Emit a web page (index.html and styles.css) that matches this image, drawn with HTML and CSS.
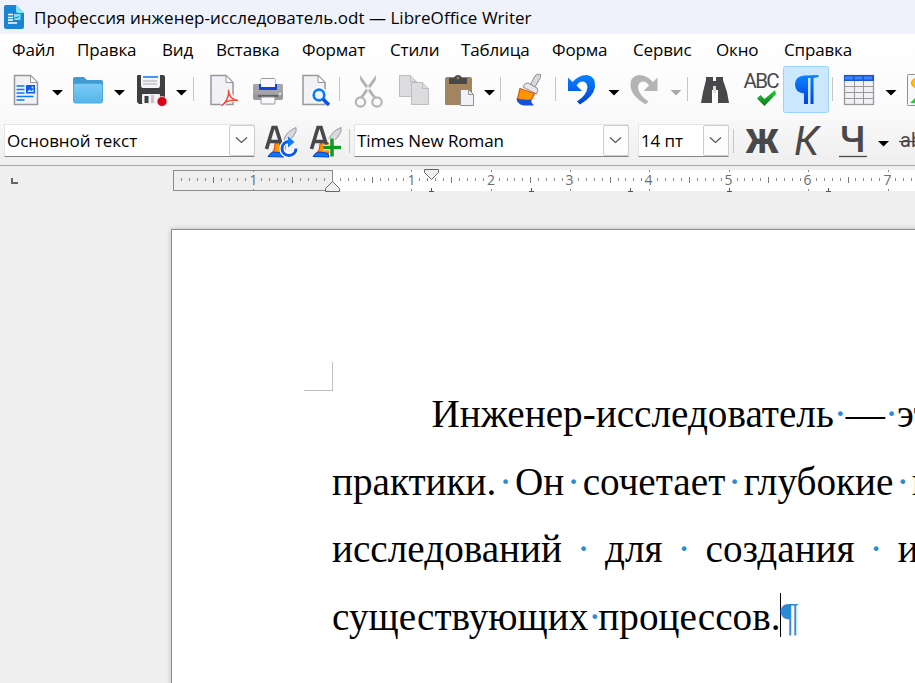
FILE: index.html
```html
<!DOCTYPE html>
<html lang="ru">
<head>
<meta charset="utf-8">
<title>Профессия инженер-исследователь.odt — LibreOffice Writer</title>
<link rel="stylesheet" href="styles.css">
</head>
<body>
<svg class="defs" width="0" height="0" aria-hidden="true">
  <defs>
    <linearGradient id="folder" x1="0" y1="0" x2="0" y2="1"><stop offset="0" stop-color="#7dcbf4"/><stop offset="1" stop-color="#55b5ea"/></linearGradient>
    <linearGradient id="blue" x1="0" y1="0" x2="0" y2="1"><stop offset="0" stop-color="#0a84ff"/><stop offset="1" stop-color="#0040dd"/></linearGradient>
    <linearGradient id="green" x1="0" y1="0" x2="0" y2="1"><stop offset="0" stop-color="#28cd41"/><stop offset="1" stop-color="#0a7a18"/></linearGradient>
    <g id="arrow"><path d="M2.500 24h11l-5.500 5.500z"/></g>
    <g id="chev"><path d="M6 11.500l5.500 5 5.500-5" fill="none" stroke="#555" stroke-width="1.200"/></g>
    <path id="turn" d="M568 77.500l4.500 4.500q7-7.500 14.500-7 9 1.500 8 12-1.500 9.500-15 17.500l-3-3q9.500-6 10.500-14-.5-6-5-6-3.500 0-6 4l5.500 5.500H568z"/>
    <g id="stylebase">
      <path d="M284 139q3-8 12-11.500v4q-2 6-9 10.500z" fill="#d8d8de" stroke="#98989d" stroke-width="1"/>
      <path d="M275 144l4-2 7 2-2 9-14 1q5-2 5-10z" fill="#ff9500" stroke="#e8501a" stroke-width="1.200"/>
      <path d="M268 156.500q4-6 10-4l5 1 1 3.500z" fill="#0a78f0" stroke="#0040dd"/>
      <path d="M266.500 149L273 127.500h3L281.500 145M269.500 141.500h10" fill="none" stroke="#48484a" stroke-width="3.600"/>
    </g>
  </defs>
</svg>
<header class="title">
  <svg width="21" height="25" viewBox="4 5 21 25"><path d="M6 5h12l6 6v16q0 2-2 2H6q-2 0-2-2V7q0-2 2-2z" fill="#1a86d3"/><path d="M16 5l8 8v-6q0-2-2-2z" fill="#eff2fa"/><path d="M16 5l8 8h-6q-2 0-2-2z" fill="#7fe8fb"/><path d="M8 14.500h5M8 17.500h5M8 20h5M8 23h9" stroke="#fff" stroke-width="1.300"/><rect x="14" y="14" width="6.500" height="6" fill="#7fe0f5"/><path d="M14 19l2-2 1 1 2-2" stroke="#1a86d3" fill="none"/></svg>
  <span>Профессия инженер-исследователь.odt — LibreOffice Writer</span>
</header>
<div class="chrome">
<nav class="menu">
  <span>Файл</span><span>Правка</span><span>Вид</span><span>Вставка</span><span>Формат</span><span>Стили</span><span>Таблица</span><span>Форма</span><span>Сервис</span><span>Окно</span><span>Справка</span>
</nav>
<div class="bar">
  <svg width="46" height="46" viewBox="3 66 46 46"><path d="M14.500 75.500h16l7 7v22h-23z" fill="#f2f2f6" stroke="#98989d" stroke-width="1.500"/><path d="M30.500 75.500v7h7z" fill="#fff" stroke="#98989d"/><path d="M16.500 86h8M16.500 89.500h8M16.500 93h8M16.500 96.500h17M16.500 100h8" stroke="#0a7af5" stroke-width="1.500"/><rect x="26" y="85" width="9" height="8.500" fill="#0a5cf0"/><path d="M27 92l2.500-2.500 2 1.500 2-2v3z" fill="#cfe6ff"/><circle cx="32.500" cy="87.500" r="1" fill="#cfe6ff"/></svg>
  <svg width="16" height="46"><use href="#arrow" x=".5"/></svg>
  <svg width="46" height="46" viewBox="65 66 46 46"><path d="M73 79q0-2 2-2h9l3 3h14q2 0 2 2v8H73z" fill="#3f9bd2"/><rect x="73.500" y="83.500" width="29" height="19.500" rx="2" fill="url(#folder)" stroke="#4ba9de"/></svg>
  <svg width="16" height="46"><use href="#arrow" x=".5"/></svg>
  <svg width="46" height="46" viewBox="127 66 46 46"><path d="M137 76q0-1 1-1h25q2 0 2 2v26q0 1-1 1h-25l-2-2z" fill="#3f3f42"/><path d="M141 75h19v10q0 3-2 3h-15q-2 0-2-3z" fill="#f4f4f7"/><path d="M143 77h15" stroke="#0a7af5" stroke-width="1.500"/><path d="M143 81h14M143 84h14" stroke="#a8a8ad"/><rect x="142" y="94" width="18" height="10" rx="1" fill="#f2f2f6"/><rect x="144.500" y="96" width="4" height="7" fill="#3f3f42"/><path d="M151 95h3v8h-3z" fill="#c4c4c8"/><circle cx="162" cy="101.500" r="5" fill="#d70015" stroke="#fff" stroke-width=".7"/></svg>
  <svg width="16" height="46"><use href="#arrow" x=".5"/></svg>
  <i class="sep s11"></i>
  <svg width="46" height="46" viewBox="200 66 46 46"><path d="M211 75.500h15l7 7v22h-22z" fill="#f2f2f6" stroke="#98989d" stroke-width="1.500"/><path d="M226 75.500v7h7z" fill="#fff" stroke="#98989d"/><path d="M222 105c4-2 8-9 7-16 0 6 3 10 9 11-6-1-12 0-16 5z" fill="#fff" stroke="#fff" stroke-width="4"/><path d="M221.500 105.500c4-2 8-9 7-16 0 6 3 10 9.500 11-6-1-12 0-16.500 5z" fill="none" stroke="#ff453a" stroke-width="1.500"/></svg>
  <svg width="46" height="46" viewBox="246 66 46 46"><rect x="261" y="78.500" width="14" height="9" rx="1" fill="#f8f8fa" stroke="#98989d"/><rect x="253" y="84" width="30" height="16" rx="2" fill="#98989d"/><path d="M253 94h30v-8q0-2-2-2h-26q-2 0-2 2z" fill="#a4a4a9"/><path d="M261 79h14v5h2v5h-18v-5h2z" fill="#f8f8fa"/><path d="M259 84h2v3h14v-3h2v6h-18z" fill="#1044dc"/><path d="M258 96h20" stroke="#636366" stroke-width="2"/><rect x="261" y="97" width="14" height="7" rx="1" fill="#f8f8fa" stroke="#98989d"/><circle cx="280" cy="94" r="1" fill="#fff"/></svg>
  <svg width="45" height="46" viewBox="292 66 45 46"><path d="M303 75.500h15l7 7v22h-22z" fill="#f2f2f6" stroke="#98989d" stroke-width="1.500"/><path d="M318 75.500v7h7z" fill="#fff" stroke="#98989d"/><circle cx="319" cy="95" r="5.300" fill="#f0f5ff" stroke="#fff" stroke-width="6"/><circle cx="319" cy="95" r="5.300" fill="#f0f5ff" stroke="#0a7cff" stroke-width="2.700"/><path d="M323 99l6 6" stroke="#0a50e8" stroke-width="3.400"/></svg>
  <i class="sep s8 early"></i>
  <svg width="46" height="46" viewBox="345 66 46 46"><g fill="none" stroke="#b4b4b6"><circle cx="360.500" cy="102" r="4.700" stroke-width="2.200"/><circle cx="377" cy="102" r="4.700" stroke-width="2.200"/></g><path d="M360 75q-1 5 3 9l5 7 6 8 2-2-5-7zM376 75q1 5-3 9l-5 7-6 8-2-2 5-7z" fill="#b4b4b6"/></svg>
  <svg width="45" height="46" viewBox="391 66 45 46"><g fill="#dcdcde" stroke="#bdbdc0"><path d="M399.500 75.500h11l6 6v15h-17z"/><path d="M410.500 75.500v6h6"/><path d="M411.500 82.500h11l6 6v16h-17z"/><path d="M422.500 82.500v6h6"/></g></svg>
  <svg width="45" height="46" viewBox="436 66 45 46"><path d="M445 79q0-2 2-2h23q2 0 2 2v25q0 1-1 1h-25q-1 0-1-1z" fill="#a2845e"/><path d="M449 78h5c1-4 7-4 8 0h5v6h-18z" fill="#48484a"/><circle cx="458" cy="78" r="1.300" fill="#a2845e"/><path d="M460.500 89.500h8l5 5v11h-13z" fill="#f2f2f6" stroke="#8e8e93"/><path d="M468.500 89.500v5h5" fill="none" stroke="#8e8e93"/></svg>
  <svg width="16" height="46"><use href="#arrow" x=".5"/></svg>
  <i class="sep s9"></i>
  <svg width="46" height="46" viewBox="506 66 46 46"><path d="M530.500 84l4.500-8q2-3 5.500-1.500v3L535 87z" fill="#d8d8dc" stroke="#8e8e93"/><path d="M523 87q2-5 5-4l9 5q2 2-.5 6z" fill="#e8e8ec" stroke="#8e8e93"/><path d="M520 88.500l14.500 5-4 8-13-2.500z" fill="#ff9500" stroke="#d85a20" stroke-width="1.300"/><path d="M516.500 98.500q6 2 14 1 1 4 3.500 6h-10q-7-1-7.500-7z" fill="#1450dc"/></svg>
  <i class="sep s8"></i>
  <svg width="46" height="46" viewBox="560 66 46 46" fill="url(#blue)"><use href="#turn"/></svg>
  <svg width="16" height="46"><use href="#arrow"/></svg>
  <svg width="46" height="46" viewBox="622 66 46 46" fill="#b4b4b6"><use href="#turn" transform="translate(1225.500) scale(-1 1)"/></svg>
  <svg width="16" height="46" fill="#a9a9ab"><use href="#arrow"/></svg>
  <i class="sep s8"></i>
  <svg width="46" height="46" viewBox="692 66 46 46" fill="#48484a"><path d="M706 77h7v4h3v-4h7v3l4 12 2 11h-11V90h-6v13h-11l2-11 3-12z"/><path d="M713 86v7h3v-7z" fill="#ddd"/></svg>
  <svg width="45" height="46" viewBox="738 66 45 46"><text class="abc" x="743.500" y="88" textLength="36">ABC</text><path d="M757 98.500l3.500-3.500 4 4 10.500-9 1 4-11.500 12z" fill="url(#green)"/></svg>
  <svg class="on" width="46" height="47" viewBox="783 66 46 47"><rect x="783.500" y="66.500" width="45" height="46" rx="2" fill="#cce8ff" stroke="#99d1ff"/><path d="M818.500 75v2l-5 1v26h-3V78h-2.500v26h-4V93.500q-9-1-9-9t9-9z" fill="url(#blue)"/></svg>
  <i class="sep s8"></i>
  <svg width="46" height="46" viewBox="837 66 46 46"><rect x="844.500" y="75.500" width="29" height="29" fill="#f2f2f6" stroke="#98989d" stroke-width="1.300"/><path d="M845 86.500h28M845 92.500h28M845 98.500h28M854.500 80v24M863.500 80v24" stroke="#98989d"/><rect x="844" y="75" width="30" height="6" fill="#1a53dc"/><path d="M845 78h28" stroke="#3a88ff" stroke-width="3" stroke-dasharray="8 1.500"/></svg>
  <svg width="16" height="46"><use href="#arrow"/></svg>
  <svg width="16" height="46" viewBox="899 66 16 46"><rect x="907.500" y="74.500" width="20" height="31" rx="1" fill="#f8f8fa" stroke="#8e8e93"/><circle cx="916" cy="83" r="4.500" fill="#ffc400" stroke="#ff9500"/><path d="M910 103l8-8v8z" fill="#28cd41"/></svg>
</div>
<div class="bar second">
  <div class="combo c1"><span>Основной текст</span><b><svg width="24" height="28"><use href="#chev"/></svg></b></div>
  <svg width="44" height="36" viewBox="260 123 44 36"><use href="#stylebase"/><path d="M296 148a7 7 0 1 1-7-6.500" fill="none" stroke="#fff" stroke-width="5.500"/><path d="M296 148.500a7 7 0 1 1-7-7" fill="none" stroke="#0a58ef" stroke-width="3"/><path d="M288 136.500l6.500 5.500-6.500 5.500z" fill="#0a7cff"/></svg>
  <svg width="43" height="36" viewBox="304 123 43 36"><use href="#stylebase" x="45"/><path d="M332 138.500v18M323 147.500h18" stroke="#fff" stroke-width="5.500"/><path d="M332 138.500v18M323 147.500h18" stroke="#129a22" stroke-width="3.600"/></svg>
  <i class="sep s7"></i>
  <div class="combo c2"><span>Times New Roman</span><b><svg width="24" height="28"><use href="#chev"/></svg></b></div>
  <div class="combo c3"><span>14 пт</span><b><svg width="24" height="28"><use href="#chev"/></svg></b></div>
  <i class="sep s9"></i>
  <svg width="45" height="36" viewBox="739 123 45 36"><text class="fmt bold" x="745.500" y="152.500" textLength="33" lengthAdjust="spacingAndGlyphs">Ж</text></svg>
  <svg width="45" height="36" viewBox="784 123 45 36"><text class="fmt ital" x="794" y="155" textLength="25" lengthAdjust="spacingAndGlyphs">К</text></svg>
  <svg width="46" height="36" viewBox="829 123 46 36"><text class="fmt und" x="839.500" y="152" textLength="26" lengthAdjust="spacingAndGlyphs">Ч</text><path d="M839 156.500h28" stroke="#48484a" stroke-width="1.300"/></svg>
  <svg width="16" height="36" viewBox="0 6 16 36"><use href="#arrow" x=".5"/></svg>
  <svg width="24" height="36" viewBox="891 123 24 36"><text class="strike" x="900" y="147">ab</text><path d="M899 141.500h20" stroke="#48484a" stroke-width="1.300"/></svg>
</div>
</div>
<div class="rulerbar">
  <svg width="915" height="34" viewBox="0 166 915 34">
    <path d="M12 178v5.500M11 183h7" stroke="#666" stroke-width="2"/>
    <rect x="333" y="170" width="582" height="21" fill="#fff"/>
    <rect x="173.500" y="170.500" width="159" height="20" fill="#efefef" stroke="#8c8c8c"/>
    <g shape-rendering="crispEdges">
      <path class="tenths" d="M181.400 179.500H915"/>
      <path class="halves" d="M213.100 180H915"/>
    </g>
    <g stroke="#888"><path d="M253.500 170v2M253.500 189v2M411.500 170v2M411.500 189v2M491.500 170v2M491.500 189v2M570.500 170v2M570.500 189v2M649.500 170v2M649.500 189v2M729.500 170v2M729.500 189v2M808.500 170v2M808.500 189v2M888.500 170v2M888.500 189v2"/></g>
    <path d="M429 191.500h5M431.500 188v3M529 191.500h5M531.500 188v3M628 191.500h5M630.500 188v3M727 191.500h5M729.500 188v3M826 191.500h5M828.500 188v3" stroke="#555"/>
    <g class="nums"><text x="253.500" y="185">1</text><text x="411.500" y="185">1</text><text x="491" y="185">2</text><text x="569.500" y="185">3</text><text x="648.500" y="185">4</text><text x="728.500" y="185">5</text><text x="807.500" y="185">6</text><text x="887.500" y="185">7</text></g>
    <path d="M424.500 169.500h14v3l-7 7-7-7z" fill="#efefef" stroke="#666"/>
    <path d="M325.500 191.500v-3l7-7 7 7v3z" fill="#efefef" stroke="#666"/>
  </svg>
</div>
<main class="desk">
  <article class="page">
    <div class="corner"></div>
    <p class="l1"><span>Инженер-исследователь</span><i>·</i><span class="dash">—</span><i>·</i><span>это</span></p>
    <p class="l2"><span>практики.</span><i>·</i><span>Он</span><i>·</i><span>сочетает</span><i>·</i><span>глубокие</span><i>·</i><span>и</span></p>
    <p class="l3"><span>исследований</span><i>·</i><span>для</span><i>·</i><span>создания</span><i>·</i><span>и</span></p>
    <p class="l4"><span>существующих</span><i>·</i><span>процессов.</span><b class="caret"></b><em>¶</em></p>
  </article>
</main>
</body>
</html>
```
FILE: styles.css
```css
* { box-sizing: border-box; }
body {
  margin: 0; width: 915px; height: 683px; overflow: hidden;
  background: #efefef; color: #000;
  font-family: "Open Sans", "Noto Sans", sans-serif; font-size: 17px;
}
svg { display: block; flex: none; }
.defs { position: absolute; }
.title { display: flex; align-items: center; gap: 9px; height: 34px; padding-left: 4px; background: #eff2fa; white-space: nowrap; letter-spacing: .03px; }
.chrome { height: 132px; border-bottom: 1px solid #a8a8a8; background: linear-gradient(#fff, #fafafa 60%, #eee); }
.menu { display: grid; grid-template-columns: 65px 85px 54px 86px 88px 71px 91px 81px 83px 68px 80px; height: 32px; padding-left: 12px; line-height: 32px; white-space: nowrap; letter-spacing: -.15px; }
.bar { display: flex; padding-left: 3px; height: 46px; }
.second { height: 36px; margin-top: 11px; padding-left: 4px; }
.sep { flex: none; align-self: center; height: 24px; background: linear-gradient(90deg, #c6c6c6, #c6c6c6) 3px 0 / 1px 100% no-repeat; }
.s11 { width: 11px; background-position: 4px 0; }
.s9 { width: 9px; }
.s8 { width: 8px; }
.early { background-position: 2px 0; }
.s7 { width: 7px; background-position: 2px 0; }
.combo { display: flex; justify-content: space-between; flex: none; height: 33px; margin-top: 1px; border: 1px solid #e5e5e5; border-bottom-color: #858585; background: #fff; line-height: 32px; white-space: nowrap; letter-spacing: -.05px; }
.combo span { padding-left: 2px; }
.combo b { width: 26px; height: 31px; margin-right: -1px; border: 1px solid #ccc; border-radius: 2px; background: #fdfdfd; }
.c1 { width: 251px; margin-right: 5px; }
.c2 { width: 275px; }
.c3 { width: 91px; margin: 1px 1px 0 9px; letter-spacing: -.1px; }
.abc { font: 20.5px Roboto, sans-serif; fill: #48484a; }
.fmt { font-family: Roboto, sans-serif; fill: #48484a; }
.bold { font-size: 33px; font-weight: 900; }
.ital { font-size: 41px; font-style: italic; }
.und { font-size: 37px; font-weight: 500; }
.strike { font: 20px Roboto, sans-serif; fill: #48484a; }
.rulerbar { height: 34px; }
.tenths { stroke: #8c8c8c; stroke-width: 3; stroke-dasharray: 1 6.930 1 6.930 1 6.930 1 6.930 1 6.930 1 6.930 1 6.930 1 6.930 1 14.860; }
.halves { stroke: #777; stroke-width: 6; stroke-dasharray: 1 78.300; }
.nums { font: 14px "Open Sans", sans-serif; fill: #6c6c72; text-anchor: middle; }
.desk { height: 483px; padding: 29px 0 0 171px; overflow: hidden; }
.page { width: 800px; height: 500px; padding: 132px 0 0 160px; border: 1px solid #8e8e8e; background: #fff; box-shadow: 0 0 5px #bbb; font: 39.2px/67.700px "Liberation Serif", serif; }
.corner { width: 29px; height: 29px; margin-left: -28px; border: solid #c0c0c0; border-width: 0 1px 1px 0; }
.page p { display: flex; margin: 0; height: 67.700px; white-space: nowrap; }
.page .l1 { margin-top: -11px; padding-left: 99.500px; }
.page i { flex: none; font-style: normal; text-align: center; color: #2a8ad6; }
.l1 i { width: 12px; }
.l2 i { width: 18.500px; }
.l3 i { width: 43px; }
.l4 i { width: 10px; }
.caret { width: 1px; height: 44px; margin: 10px 0 0 -1px; background: #000; }
.page em { font-style: normal; color: #2a8ad6; }
```
